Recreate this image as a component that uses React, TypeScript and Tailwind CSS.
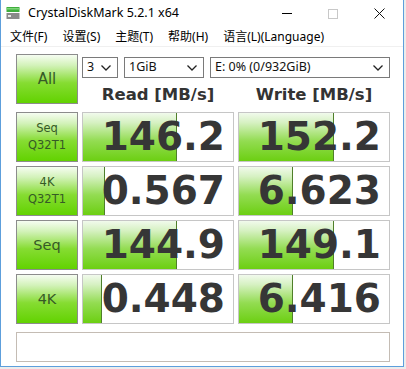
import React from "react"

const ui = { fontFamily: '"Noto Sans", "Noto Sans CJK SC", sans-serif' }
const verd = { fontFamily: '"DejaVu Sans", Verdana, sans-serif' }

const rows = [
  { label: ["Seq", "Q32T1"], read: "146.2", write: "152.2", rf: 94, wf: 95 },
  { label: ["4K", "Q32T1"], read: "0.567", write: "6.623", rf: 22, wf: 54 },
  { label: ["Seq"], read: "144.9", write: "149.1", rf: 94, wf: 95 },
  { label: ["4K"], read: "0.448", write: "6.416", rf: 19, wf: 54 },
]

function Chevron() {
  return (
    <svg width="10" height="6" viewBox="0 0 10 6" className="shrink-0">
      <path d="M0.5 0.5 L5 5 L9.5 0.5" fill="none" stroke="#222" strokeWidth="1.3" />
    </svg>
  )
}

function Combo({ text, w }: { text: string; w: string }) {
  return (
    <div
      className={`${w} h-[21px] border border-[#7a7a7a] bg-white flex items-center justify-between pl-[4px] pr-[6px] text-[12.5px] text-[#111]`}
      style={ui}
    >
      <span className="leading-none">{text}</span>
      <Chevron />
    </div>
  )
}

function LabelBtn({ lines, big }: { lines: string[]; big?: boolean }) {
  return (
    <div
      className="h-[50px] border border-[#8c8c8c] bg-[linear-gradient(to_bottom,#f6fdf2_0%,#d2f2b8_22%,#86dc32_58%,#62d200_100%)] flex flex-col items-center justify-center text-[#365a26]"
      style={verd}
    >
      {lines.length === 2 ? (
        <>
          <span className="text-[11.5px] leading-[17px]">{lines[0]}</span>
          <span className="text-[11.5px] leading-[17px]">{lines[1]}</span>
        </>
      ) : (
        <span className={big ? "text-[15px] leading-none" : "text-[14.5px] leading-none"}>{lines[0]}</span>
      )}
    </div>
  )
}

function ValueBox({ value, fill }: { value: string; fill: number }) {
  return (
    <div className="relative h-[50px] border border-[#c6c6c6] bg-white flex">
      <div
        className="h-full border-r border-[#4f7f2a] bg-[linear-gradient(to_bottom,#f1faec_0%,#d6f1c2_20%,#93dc52_58%,#6ccf12_100%)]"
        style={{ width: fill }}
      />
      <div
        className="absolute inset-0 flex items-center justify-end pr-[8px] text-[39px] font-bold text-[#363636] leading-none"
        style={verd}
      >
        {value}
      </div>
    </div>
  )
}

export default function App() {
  return (
    <div className="w-[406px] h-[369px] bg-[#ececec]">
      <div className="w-[404px] h-[367px] bg-white border-l border-r border-b border-[#5d9fdc] flex flex-col">
        {/* title bar */}
        <div className="h-[27px] flex items-center">
          <svg width="14" height="13" viewBox="0 0 14 13" className="ml-[5px] mr-[8px]">
            <rect x="0.5" y="0" width="13" height="5" fill="#3fae3c" />
            <rect x="0.5" y="1" width="13" height="1.5" fill="#7ed67a" />
            <rect x="0.5" y="6" width="13" height="6" fill="#8a8a8a" />
            <rect x="2" y="8" width="3" height="2" fill="#e8e8e8" />
          </svg>
          <span className="text-[12.5px] text-black" style={ui}>
            CrystalDiskMark 5.2.1 x64
          </span>
          <div className="ml-auto flex items-center h-full">
            <div className="w-[46px] flex justify-center">
              <div className="w-[10px] h-px bg-black" />
            </div>
            <div className="w-[46px] flex justify-center">
              <div className="w-[10px] h-[10px] border border-[#c8c8c8]" />
            </div>
            <div className="w-[46px] flex justify-center mr-[1px]">
              <svg width="11" height="11" viewBox="0 0 11 11">
                <path d="M0.5 0.5 L10.5 10.5 M10.5 0.5 L0.5 10.5" stroke="#111" strokeWidth="1" />
              </svg>
            </div>
          </div>
        </div>
        {/* menu */}
        <div className="h-[20px] flex items-center pl-[9px] gap-[15px] text-[12px] text-black border-b border-[#f0f0f0]" style={ui}>
          <span>文件(F)</span>
          <span>设置(S)</span>
          <span>主题(T)</span>
          <span>帮助(H)</span>
          <span>语言(L)(Language)</span>
        </div>
        {/* client */}
        <div className="pt-[7px] pl-[15px] flex flex-col">
          <div className="grid grid-cols-[62px_152px_152px] gap-x-[4px] gap-y-[4px]">
            <LabelBtn lines={["All"]} big />
            <div className="col-span-2 flex flex-col">
              <div className="flex gap-[6px] mt-[3px]">
                <Combo text="3" w="w-[36px]" />
                <Combo text="1GiB" w="w-[80px]" />
                <Combo text="E: 0% (0/932GiB)" w="w-[180px]" />
              </div>
              <div className="grid grid-cols-[152px_152px] gap-x-[4px] mt-[5px] text-[16.5px] font-bold text-[#333]" style={verd}>
                <div className="text-center">Read [MB/s]</div>
                <div className="text-center">Write [MB/s]</div>
              </div>
            </div>
            {rows.map((r, i) => (
              <React.Fragment key={i}>
                <LabelBtn lines={r.label} />
                <ValueBox value={r.read} fill={r.rf} />
                <ValueBox value={r.write} fill={r.wf} />
              </React.Fragment>
            ))}
          </div>
          <div className="mt-[8px] w-[374px] h-[30px] border border-[#c4bcb4] bg-white" />
        </div>
      </div>
    </div>
  )
}
